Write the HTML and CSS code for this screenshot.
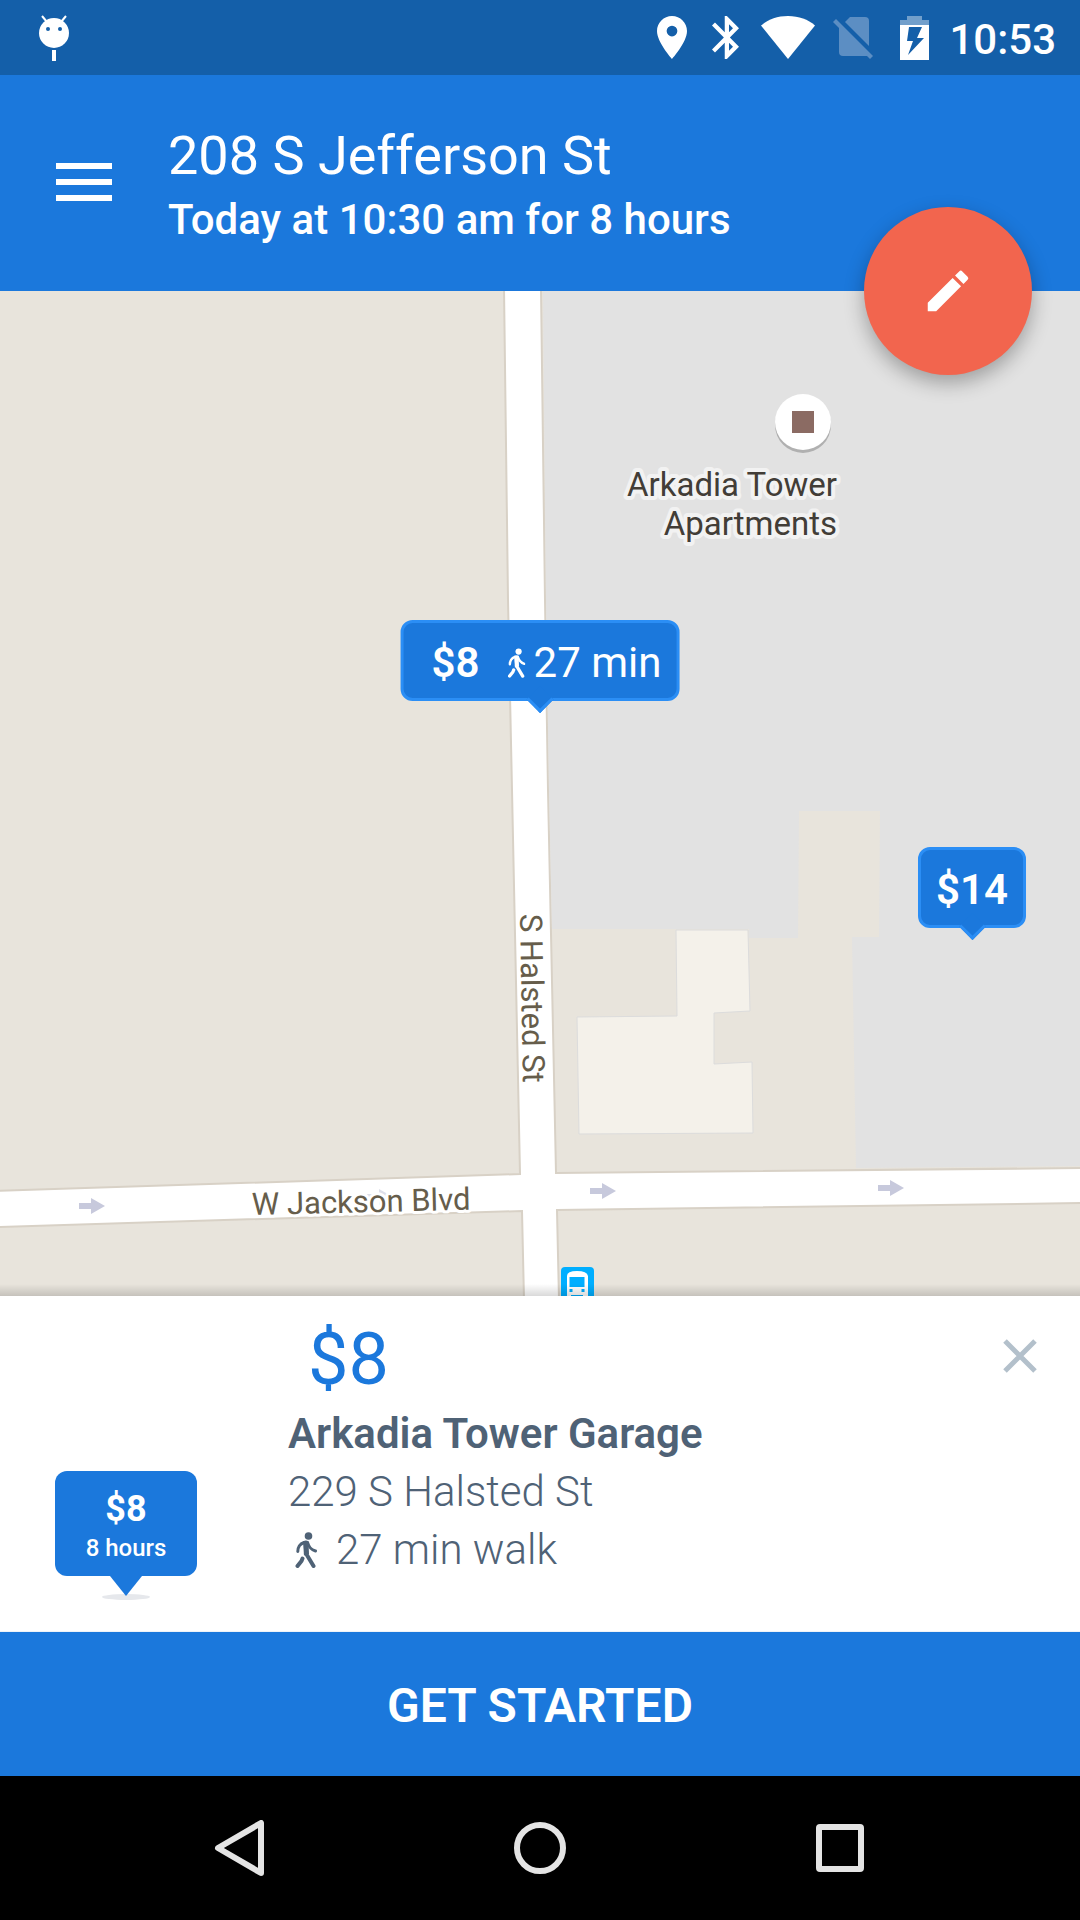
FILE: index.html
```html
<!DOCTYPE html>
<html lang="en">
<head>
<meta charset="utf-8">
<meta name="viewport" content="width=device-width, initial-scale=1">
<title>Parking near 208 S Jefferson St</title>
<link rel="stylesheet" href="styles.css">
</head>
<body>
<svg class="symbols" aria-hidden="true">
  <symbol id="walker" viewBox="0 0 22 36">
    <circle cx="13.500" cy="4" r="3.800"/>
    <path d="M9 10.500C5 12 3 14 2.800 19.500 M12.500 10.500C14 15 15.500 17.500 20.500 19" fill="none" stroke="currentColor" stroke-width="3" stroke-linecap="round" stroke-linejoin="round"/>
    <path d="M8 9.500Q11 7.500 13.500 9.500L14 22L9 23.500Z"/>
    <path d="M11 21.500 18.500 34 M7.500 26.500 6.500 29 2.500 34" fill="none" stroke="currentColor" stroke-width="4" stroke-linecap="round" stroke-linejoin="round"/>
  </symbol>
</svg>

<div class="screen">
  <div class="status-bar">
    <svg class="android" width="30" height="46" viewBox="0 0 30 46" role="img" aria-label="Android">
      <path d="M3 1l5 6M27 1l-5 6" stroke="#fff" stroke-width="2"/>
      <path d="M13 35h4v11h-4z" fill="#fff"/>
      <circle cx="15" cy="18" r="15" fill="#fff"/>
      <circle cx="9" cy="14" r="2" fill="#145fa9"/><circle cx="21" cy="14" r="2" fill="#145fa9"/>
    </svg>
    <div class="status-icons">
      <svg width="30" height="43" viewBox="5 2 14 20" preserveAspectRatio="none" fill="#fff" role="img" aria-label="Location"><path d="M12 2C8.130 2 5 5.130 5 9c0 5.250 7 13 7 13s7-7.750 7-13c0-3.870-3.130-7-7-7zm0 9.500a2.500 2.500 0 1 1 0-5 2.500 2.500 0 0 1 0 5z"/></svg>
      <svg class="bluetooth" width="27" height="43" viewBox="5 2 12.710 20" preserveAspectRatio="none" fill="#fff" role="img" aria-label="Bluetooth"><path d="M17.710 7.710 12 2h-1v7.590L6.410 5 5 6.410 10.590 12 5 17.590 6.410 19 11 14.410V22h1l5.710-5.710-4.300-4.290 4.300-4.290zM13 5.830l1.880 1.880L13 9.590V5.830zm1.880 10.460L13 18.170v-3.760l1.880 1.880z"/></svg>
      <svg class="wifi" width="54" height="43" viewBox="0 0 54 43" fill="#fff" role="img" aria-label="Wi-Fi"><path d="M27 43 0 9.500C7 3.500 16 0 27 0s20 3.500 27 9.500z"/></svg>
      <svg class="sim" width="40" height="43" viewBox="0 0 40 43" role="img" aria-label="No SIM"><g fill="#5c8ec3"><path d="M17 1h15q4 0 4 4v25L12 6z"/><path d="M6 11 35 40H10q-4 0-4-4z"/><path d="m3 3-3 3 37 37 3-3z"/></g></svg>
      <svg class="battery" width="29" height="44" viewBox="0 0 29 44" role="img" aria-label="Battery charging"><path fill="#729fcb" d="M7 0h15v4h7v5H0V4h7z"/><path fill="#fff" fill-rule="evenodd" d="M0 9h29v35H0zM9 11 7 25h6l-5 14L24 22h-7l5-11z"/></svg>
      <time class="clock">10:53</time>
    </div>
  </div>

  <header class="app-bar">
    <button class="menu" type="button" aria-label="Menu"><svg width="56" height="38" viewBox="0 0 56 38" fill="#fff"><path d="M0 0h56v6H0zM0 16h56v6H0zM0 32h56v6H0z"/></svg></button>
    <div class="search-info">
      <h1 class="place">208 S Jefferson St</h1>
      <p class="when">Today at 10:30 am for 8 hours</p>
    </div>
    <button class="fab" type="button" aria-label="Edit search"><svg width="54" height="54" viewBox="0 0 24 24" fill="#fff"><path d="M3 17.250V21h3.750L17.810 9.940l-3.750-3.750L3 17.250zM20.710 7.040a1 1 0 0 0 0-1.410l-2.340-2.340a1 1 0 0 0-1.410 0l-1.830 1.830 3.750 3.750 1.830-1.830z"/></svg></button>
  </header>

  <main class="map">
    <svg class="map-canvas" viewBox="0 291 1080 1005" preserveAspectRatio="xMidYMid slice" role="img" aria-label="Street map">
      <rect y="291" width="1080" height="1005" fill="#fff"/>
      <g fill="#e8e4dc" stroke="#d8d1c6" stroke-width="2">
        <path d="M-4 288H504L508 600 512 790 520 1174-4 1191z"/>
        <path d="M-4 1227 522 1211 524 1300H-4z"/>
        <path d="M557 1210 1084 1203V1300H559z"/>
        <path d="M541 288H1084V1168L556 1173 548 790 545 600z"/>
      </g>
      <path fill="#e2e2e2" d="M543 290H1080V1166L856 1168 852 937H879L880 811H799L798 938H749V929H552L549 790 546 600z"/>
      <path fill="#f4f1ea" stroke="#dcdcdc" d="M676 930H748L750 1011 714 1013V1064L752 1062 753 1133 579 1134 577 1017 677 1016z"/>
      <g fill="#c7c9dc">
        <path id="arrow" d="M79 1203H91V1198L105 1206 91 1214V1209H79z"/>
        <use href="#arrow" x="288" y="-9" opacity=".6"/>
        <use href="#arrow" x="511" y="-15"/>
        <use href="#arrow" x="799" y="-18"/>
      </g>
      <text class="street" transform="translate(252 1215) rotate(-1.400)">W Jackson Blvd</text>
      <text class="street" transform="translate(520 914) rotate(89)">S Halsted St</text>
      <circle cx="803" cy="425" r="28" fill="#b0b0b0"/>
      <circle cx="803" cy="422" r="28" fill="#fff"/>
      <path fill="#8b6b63" d="M792 411h22v22h-22z"/>
      <text class="poi" x="837" y="496">Arkadia Tower<tspan x="837" dy="39">Apartments</tspan></text>
      <g>
        <rect x="561" y="1267" width="33" height="40" rx="4" fill="#00aeff"/>
        <path fill="#fff" d="M567 1296V1276Q567 1271 577 1271T588 1276V1296z"/>
        <path fill="#00aeff" d="M569.500 1277h15v10h-15zM569.500 1289h3v3h-3zM581.500 1289h3v3h-3zM571 1295h12v1h-12z"/>
      </g>
    </svg>
    <button class="pin pin-near" type="button"><b>$8</b><svg class="pin-walker" width="18" height="30"><use href="#walker"/></svg><span>27 min</span></button>
    <button class="pin pin-far" type="button"><b>$14</b></button>
  </main>

  <section class="sheet" aria-label="Selected garage">
    <div class="badge"><b class="badge-price">$8</b><span class="badge-time">8 hours</span></div>
    <div class="details">
      <p class="price">$8</p>
      <h2 class="garage">Arkadia Tower Garage</h2>
      <p class="line">229 S Halsted St</p>
      <p class="line walk-line"><svg width="22" height="36"><use href="#walker"/></svg>27 min walk</p>
    </div>
    <button class="close" type="button" aria-label="Close"><svg width="34" height="34" viewBox="0 0 34 34" stroke="#b3c0cb" stroke-width="5"><path d="M2 2l30 30M32 2 2 32"/></svg></button>
  </section>
  <button class="cta" type="button">GET STARTED</button>

  <nav class="nav-bar" aria-label="System">
    <button type="button" aria-label="Back"><svg width="56" height="56" viewBox="0 0 56 56"><path d="M49 3V53L6 28z"/></svg></button>
    <button type="button" aria-label="Home"><svg width="56" height="56" viewBox="0 0 56 56"><circle cx="28" cy="28" r="23"/></svg></button>
    <button type="button" aria-label="Recent apps"><svg width="56" height="56" viewBox="0 0 56 56"><rect x="7" y="7" width="42" height="42" rx="1"/></svg></button>
  </nav>
</div>
</body>
</html>
```
FILE: styles.css
```css
* { box-sizing: border-box; }
body, h1, h2, p { margin: 0; }
body { font-family: Roboto, "Liberation Sans", sans-serif; background: #000; }
button { margin: 0; padding: 0; border: 0; background: none; font: inherit; color: inherit; cursor: pointer; }
svg { display: block; flex: none; }
.symbols { position: absolute; width: 0; height: 0; }

.screen { display: flex; flex-direction: column; min-height: 100vh; }

.status-bar {
  display: flex;
  align-items: center;
  justify-content: space-between;
  height: 75px;
  padding: 0 24px 0 39px;
  background: #145fa9;
  color: #fff;
}
.android { margin-top: -8px; }
.android, .status-icons { margin-top: 0; }
.status-icons { display: flex; align-items: center; }
.bluetooth { margin-left: 25px; }
.wifi { margin-left: 22px; }
.sim { margin-left: 18px; }
.battery { margin-left: 27px; }
.clock { margin-left: 20px; padding-top: 4px; font-size: 42px; line-height: 50px; font-weight: 500; }

.app-bar {
  position: relative;
  z-index: 1;
  display: flex;
  align-items: center;
  gap: 56px;
  padding: 37px 56px 39px;
  background: #1b78dc;
  color: #fff;
}
.search-info { padding-top: 12px; }
.place { font-size: 54px; line-height: 64px; font-weight: 400; }
.when { font-size: 42px; line-height: 64px; font-weight: 500; }
.fab {
  position: absolute;
  right: 48px;
  bottom: -84px;
  display: grid;
  place-items: center;
  width: 168px;
  height: 168px;
  border-radius: 50%;
  background: #f2654e;
  box-shadow: 0 8px 20px rgba(0, 0, 0, .3);
}

.map { position: relative; flex: 1; min-height: 600px; overflow: hidden; }
.map::after {
  content: "";
  position: absolute;
  inset: auto 0 0;
  height: 12px;
  background: linear-gradient(transparent, rgba(0, 0, 0, .15));
}
.map-canvas { position: absolute; width: 100%; height: 100%; }
.street, .poi { paint-order: stroke; stroke-linejoin: round; }
.street { font-size: 31px; fill: #665d4b; stroke: #fff; stroke-width: 6px; }
.poi { font-size: 33px; fill: #423d37; stroke: #f2f2f2; stroke-width: 8px; text-anchor: end; }

.pin {
  position: absolute;
  display: flex;
  align-items: center;
  height: 81px;
  padding: 4px 15px 0;
  border: 3px solid #2b8ef5;
  border-radius: 12px;
  background: #1b78dc;
  color: #fff;
  font-size: 42px;
  line-height: 50px;
  font-weight: 400;
  transform: translate(-50%, -100%);
}
.pin b { font-weight: 600; }
.pin::after {
  content: "";
  position: absolute;
  left: 50%;
  top: 100%;
  width: 16px;
  height: 16px;
  margin: -8px 0 0 -9px;
  border: solid #2b8ef5;
  border-width: 0 3px 3px 0;
  background: #1b78dc;
  transform: rotate(45deg);
}
.pin-near { left: 50%; top: 410px; padding-left: 28px; }
.pin-far { left: 90%; top: 637px; }
.pin-walker { margin: 0 8px 0 28px; }

.sheet {
  position: relative;
  display: flex;
  align-items: flex-end;
  gap: 91px;
  padding: 20px 43px 52px 55px;
  border-bottom: 1px solid #eef3f8;
  background: #fff;
  color: #4f6276;
}
.badge {
  position: relative;
  display: flex;
  flex-direction: column;
  align-items: center;
  width: 142px;
  margin-bottom: 3px;
  padding: 17px 0 10px;
  border-radius: 12px;
  background: #1b78dc;
  color: #fff;
}
.badge::before, .badge::after { content: ""; position: absolute; left: 50%; transform: translateX(-50%); }
.badge::before { bottom: -24px; width: 48px; height: 6px; border-radius: 50%; background: #e6e8ec; }
.badge::after { bottom: -20px; border: solid transparent; border-width: 20px 16px 0; border-top-color: #1b78dc; }
.badge-price { font-size: 36px; line-height: 42px; font-weight: 700; }
.badge-time { font-size: 24px; line-height: 36px; font-weight: 500; }
.details { flex: 1; }
.price { padding-left: 20px; margin-bottom: 1px; font-size: 72px; line-height: 88px; color: #1b78dc; }
.garage, .line { font-size: 42px; line-height: 58px; }
.garage { font-weight: 600; }
.line { font-weight: 300; }
.walk-line { display: flex; align-items: center; gap: 19px; padding-left: 7px; }
.walk-line svg, .pin-walker { fill: currentColor; }
.close { position: absolute; top: 43px; right: 43px; }

.cta {
  height: 144px;
  padding-top: 3px;
  background: #1b78dc;
  color: #fff;
  font-size: 48px;
  line-height: 56px;
  font-weight: 600;
}

.nav-bar {
  display: flex;
  align-items: center;
  justify-content: center;
  gap: 244px;
  height: 144px;
  background: #000;
}
.nav-bar svg { fill: none; stroke: #e4e4e4; stroke-width: 6; stroke-linejoin: round; }
```
